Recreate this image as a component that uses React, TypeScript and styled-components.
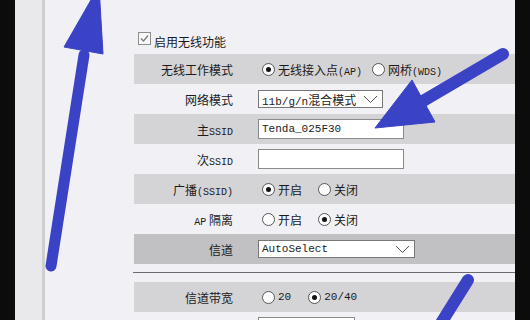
import styled, { createGlobalStyle } from "styled-components";

const GlobalStyle = createGlobalStyle`
  html, body {
    margin: 0;
    padding: 0;
    background: #0c0c0c;
    overflow: hidden;
  }
  body {
    font-family: "Noto Sans CJK SC", "Noto Sans", sans-serif;
  }
`;

type Tone = "light" | "gray" | "dark";

const toneColors: Record<Tone, string> = {
  light: "transparent",
  gray: "#d4d3d6",
  dark: "#c1c0c3",
};

export default function App() {
  return (
    <>
      <GlobalStyle />
      <Screen>
        <Edge />
        <Sidebar />
        <Main>
          <CheckLine>
            <CheckBox>
              <svg width="11" height="11" viewBox="0 0 11 11">
                <polyline
                  points="2,5.5 4.5,8 9,2.5"
                  fill="none"
                  stroke="#7a7a7a"
                  strokeWidth="1.2"
                />
              </svg>
            </CheckBox>
            <span>启用无线功能</span>
          </CheckLine>

          <Row $tone="gray">
            <Label>无线工作模式</Label>
            <Options $gap={10}>
              <Option>
                <Radio $checked />
                <span>
                  无线接入点<Mono>(AP)</Mono>
                </span>
              </Option>
              <Option>
                <Radio />
                <span>
                  网桥<Mono>(WDS)</Mono>
                </span>
              </Option>
            </Options>
          </Row>

          <Row $tone="light">
            <Label>网络模式</Label>
            <SelectBox $width={125}>
              <span>
                <Mono $size={11}>11b/g/n</Mono>混合模式
              </span>
              <Chevron />
            </SelectBox>
          </Row>

          <Row $tone="gray">
            <Label>
              主<Mono>SSID</Mono>
            </Label>
            <InputBox>Tenda_025F30</InputBox>
          </Row>

          <Row $tone="light">
            <Label>
              次<Mono>SSID</Mono>
            </Label>
            <InputBox />
          </Row>

          <Row $tone="gray">
            <Label>
              广播<Mono>(SSID)</Mono>
            </Label>
            <Options $gap={16}>
              <Option>
                <Radio $checked />
                <span>开启</span>
              </Option>
              <Option>
                <Radio />
                <span>关闭</span>
              </Option>
            </Options>
          </Row>

          <Row $tone="light">
            <Label>
              <Mono>AP</Mono> 隔离
            </Label>
            <Options $gap={16}>
              <Option>
                <Radio />
                <span>开启</span>
              </Option>
              <Option>
                <Radio $checked />
                <span>关闭</span>
              </Option>
            </Options>
          </Row>

          <Row $tone="dark">
            <Label>信道</Label>
            <SelectBox $width={157}>
              <Mono $size={11}>AutoSelect</Mono>
              <Chevron />
            </SelectBox>
          </Row>

          <Divider />

          <Row $tone="gray">
            <Label>信道带宽</Label>
            <Options $gap={17}>
              <Option>
                <Radio />
                <Mono $size={11}>20</Mono>
              </Option>
              <Option>
                <Radio $checked />
                <Mono $size={11}>20/40</Mono>
              </Option>
            </Options>
          </Row>

          <Row $tone="light" $align="start">
            <Label />
            <InputBox $width={97} />
          </Row>
        </Main>
        <Edge />

        <Arrows viewBox="0 0 530 320">
          <g fill="#3a42c6" stroke="#3a42c6" strokeLinejoin="round">
            <line x1="51" y1="266" x2="84" y2="55" strokeWidth="11" strokeLinecap="round" />
            <polygon points="64,47 103,54 99,-14" strokeWidth="1" />

            <line x1="503" y1="54" x2="423" y2="101" strokeWidth="12" strokeLinecap="round" />
            <polygon points="412,80 435,122 375,128" strokeWidth="1" />

            <line x1="468" y1="280" x2="438" y2="328" strokeWidth="12" strokeLinecap="round" />
          </g>
        </Arrows>
      </Screen>
    </>
  );
}

const Chevron = () => (
  <svg width="15" height="9" viewBox="0 0 15 9">
    <polyline points="1,1 7.5,7.5 14,1" fill="none" stroke="#555" strokeWidth="1" />
  </svg>
);

const Screen = styled.div`
  position: relative;
  display: flex;
  width: 530px;
  height: 320px;
  overflow: hidden;
  background: #0c0c0c;
`;

const Edge = styled.div`
  flex: none;
  width: 15px;
`;

const Sidebar = styled.div`
  flex: none;
  width: 27px;
  background: #e9e9eb;
  border-right: 3px solid #cfcfd2;
`;

const Main = styled.div`
  flex: none;
  width: 470px;
  box-sizing: border-box;
  padding: 28px 0 0 89px;
  background: #f1f0f4;
  color: #1b1b1b;
  font-size: 12px;
`;

const CheckLine = styled.div`
  display: flex;
  align-items: center;
  gap: 3px;
  height: 26px;
  padding-left: 4px;
`;

const CheckBox = styled.span`
  display: inline-flex;
  align-items: center;
  justify-content: center;
  width: 13px;
  height: 13px;
  box-sizing: border-box;
  margin-bottom: 6px;
  border: 1px solid #8c8c8c;
  background: #f7f7f8;
`;

const Row = styled.div<{ $tone: Tone; $align?: "center" | "start" }>`
  display: grid;
  grid-template-columns: 99px 1fr;
  column-gap: 25px;
  align-items: ${(p) => p.$align ?? "center"};
  height: 30px;
  background: ${(p) => toneColors[p.$tone]};
  ${(p) => (p.$align === "start" ? "padding-top: 5px; box-sizing: border-box;" : "")}
`;

const Label = styled.div`
  text-align: right;
  white-space: nowrap;
`;

const Mono = styled.span<{ $size?: number }>`
  font-family: "Liberation Mono", monospace;
  font-size: ${(p) => p.$size ?? 10}px;
`;

const Options = styled.div<{ $gap: number }>`
  display: flex;
  align-items: center;
  gap: ${(p) => p.$gap}px;
  padding-left: 4px;
`;

const Option = styled.label`
  display: inline-flex;
  align-items: center;
  gap: 3px;
  white-space: nowrap;
`;

const Radio = styled.span<{ $checked?: boolean }>`
  position: relative;
  display: inline-block;
  width: 13px;
  height: 13px;
  box-sizing: border-box;
  border: 1px solid #555;
  border-radius: 50%;
  background: #fff;

  &::after {
    content: "";
    display: ${(p) => (p.$checked ? "block" : "none")};
    position: absolute;
    left: 3px;
    top: 3px;
    width: 5px;
    height: 5px;
    border-radius: 50%;
    background: #111;
  }
`;

const SelectBox = styled.div<{ $width: number }>`
  display: flex;
  align-items: center;
  justify-content: space-between;
  width: ${(p) => p.$width}px;
  height: 18px;
  box-sizing: border-box;
  padding: 0 4px 0 3px;
  border: 1px solid #777;
  background: #fff;
  white-space: nowrap;
`;

const InputBox = styled.div<{ $width?: number }>`
  display: flex;
  align-items: center;
  width: ${(p) => p.$width ?? 146}px;
  height: 20px;
  box-sizing: border-box;
  padding: 0 3px;
  border: 1px solid #8a8a8a;
  background: #fff;
  font-family: "Liberation Mono", monospace;
  font-size: 11px;
`;

const Divider = styled.div`
  height: 1px;
  margin: 8px 0 9px -1px;
  background: #6b6b6b;
`;

const Arrows = styled.svg`
  position: absolute;
  left: 0;
  top: 0;
  width: 530px;
  height: 320px;
  pointer-events: none;
`;
